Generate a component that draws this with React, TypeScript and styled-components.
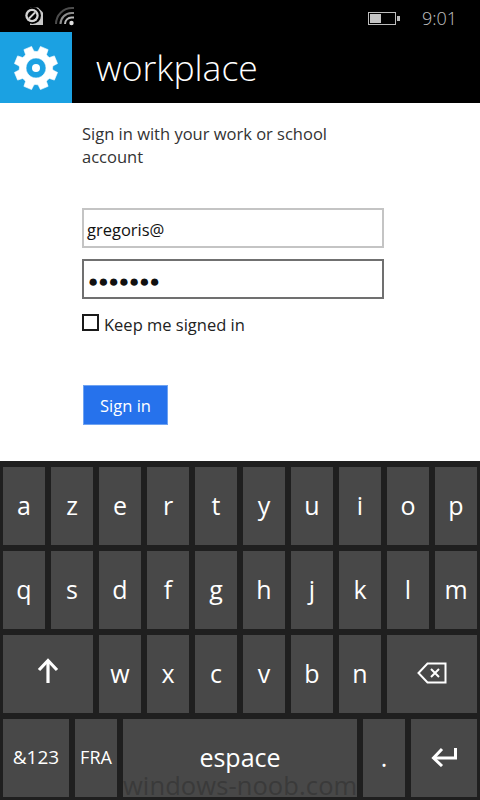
import { FC } from 'react';
import styled, { createGlobalStyle } from 'styled-components';

const UI_FONT = '"Open Sans", "Noto Sans", "Liberation Sans", sans-serif';

const GlobalStyle = createGlobalStyle`
  html, body {
    margin: 0;
    padding: 0;
    background: #000;
  }
  * {
    box-sizing: border-box;
  }
`;

type KeyDef = {
  label: string;
  span?: number;
  kind?: 'shift' | 'back' | 'enter';
  fontSize?: number;
};

const rows: KeyDef[] = [
  ...'azertyuiop'.split('').map((label) => ({ label })),
  ...'qsdfghjklm'.split('').map((label) => ({ label })),
  { label: 'shift', span: 4, kind: 'shift' },
  ...'wxcvbn'.split('').map((label) => ({ label })),
  { label: 'back', span: 4, kind: 'back' },
  { label: '&123', span: 3, fontSize: 19 },
  { label: 'FRA', span: 2, fontSize: 18 },
  { label: 'espace', span: 10 },
  { label: '.', span: 2 },
  { label: 'enter', span: 3, kind: 'enter' },
];

const GearIcon: FC = () => {
  const teeth = 8;
  const cx = 36;
  const cy = 36;
  let d = '';
  for (let i = 0; i < teeth; i++) {
    const a = (i / teeth) * Math.PI * 2 + Math.PI / 8;
    const w = 0.24;
    const pts = [
      [16.5, a - 0.37],
      [17, a - w - 0.03],
      [22, a - w + 0.05],
      [22, a + w - 0.05],
      [17, a + w + 0.03],
    ];
    pts.forEach(([r, t], j) => {
      const x = (cx + r * Math.cos(t)).toFixed(2);
      const y = (cy + r * Math.sin(t)).toFixed(2);
      d += `${i === 0 && j === 0 ? 'M' : 'L'}${x} ${y} `;
    });
  }
  d += 'Z M36 26 a10 10 0 1 0 0.01 0 Z';
  return (
    <svg width="72" height="72" viewBox="0 0 72 72">
      <path d={d} fill="#fff" fillRule="evenodd" stroke="#fff" strokeWidth="0.6" strokeLinejoin="round" />
      <circle cx="36" cy="36" r="4" fill="#fff" />
    </svg>
  );
};

const ShiftIcon: FC = () => (
  <svg width="22" height="26" viewBox="0 0 22 26" fill="none" stroke="#fff" strokeWidth="3.2">
    <path d="M11 25V3" />
    <path d="M2 12l9-9.5 9 9.5" />
  </svg>
);

const BackIcon: FC = () => (
  <svg width="30" height="22" viewBox="0 0 30 22" fill="none" stroke="#fff" strokeWidth="2">
    <path d="M28.5 1.5H10.5L1.5 11l9 9.5h18z" />
    <path d="M14 7l8 8M22 7l-8 8" />
  </svg>
);

const EnterIcon: FC = () => (
  <svg width="26" height="20" viewBox="0 0 26 20" fill="none" stroke="#fff" strokeWidth="3">
    <path d="M24.5 1v10H3" />
    <path d="M11 2l-8.5 9 8.5 8" />
  </svg>
);

const App: FC = () => (
  <Screen>
    <GlobalStyle />
    <StatusBar>
      <StatusLeft>
        <svg width="20" height="20" viewBox="0 0 20 20">
          <path d="M6 1.5h8l5 5v12.5H6z" fill="#c8c8c8" />
          <circle cx="8.5" cy="9.5" r="8.5" fill="#000" />
          <circle cx="8" cy="9.5" r="6.7" fill="#d4d4d4" />
          <circle cx="8" cy="9.5" r="4.4" fill="#000" />
          <path d="M5 12.5l6-6" stroke="#d4d4d4" strokeWidth="1.8" />
        </svg>
        <svg width="19" height="20" viewBox="0 0 19 20" fill="none">
          <path d="M1 18a16 16 0 0 1 16-16h2" strokeWidth="2" stroke="#4c4c4c" />
          <path d="M5.5 18a11 11 0 0 1 11-11h2.5" strokeWidth="2" stroke="#8c8c8c" />
          <path d="M10 18a6.5 6.5 0 0 1 6.5-6.5h2.5" strokeWidth="2" stroke="#bcbcbc" />
          <circle cx="16.5" cy="17" r="2.2" fill="#e0e0e0" />
        </svg>
      </StatusLeft>
      <StatusRight>
        <Battery>
          <BatteryLevel />
        </Battery>
        <BatteryCap />
        <Clock>9:01</Clock>
      </StatusRight>
    </StatusBar>
    <Header>
      <AppTile>
        <GearIcon />
      </AppTile>
      <Title>workplace</Title>
    </Header>
    <Form>
      <Intro>Sign in with your work or school account</Intro>
      <Field>gregoris@</Field>
      <PasswordField>●●●●●●●</PasswordField>
      <KeepRow>
        <CheckBox />
        <KeepLabel>Keep me signed in</KeepLabel>
      </KeepRow>
      <SignIn>Sign in</SignIn>
    </Form>
    <Keyboard>
      {rows.map((key, i) => (
        <Key key={i} $span={key.span ?? 2} $fontSize={key.fontSize ?? 25} $lift={key.kind === 'shift' ? 7 : 3}>
          {key.kind === 'shift' && <ShiftIcon />}
          {key.kind === 'back' && <BackIcon />}
          {key.kind === 'enter' && <EnterIcon />}
          {!key.kind && key.label}
        </Key>
      ))}
      <Watermark>windows-noob.com</Watermark>
    </Keyboard>
  </Screen>
);

export default App;

const Screen = styled.div`
  width: 480px;
  height: 800px;
  overflow: hidden;
  display: flex;
  flex-direction: column;
  background: #fff;
  font-family: ${UI_FONT};
`;

const StatusBar = styled.div`
  height: 32px;
  background: #000;
  display: flex;
  align-items: flex-start;
  justify-content: space-between;
  padding: 6px 24px 0;
`;

const StatusLeft = styled.div`
  display: flex;
  gap: 11px;
`;

const StatusRight = styled.div`
  display: flex;
  align-items: center;
  height: 24px;
`;

const Battery = styled.div`
  width: 28px;
  height: 13px;
  border: 1px solid #bdbdbd;
  padding: 1px;
`;

const BatteryLevel = styled.div`
  width: 11px;
  height: 100%;
  background: #c4c4c4;
`;

const BatteryCap = styled.div`
  width: 3px;
  height: 5px;
  margin-left: 1px;
  background: #bdbdbd;
`;

const Clock = styled.div`
  margin-left: 22px;
  margin-right: -1px;
  color: #c0c0c0;
  font-size: 18px;
  font-weight: 300;
  line-height: 24px;
`;

const Header = styled.div`
  height: 71px;
  background: #000;
  display: flex;
  align-items: flex-start;
`;

const AppTile = styled.div`
  width: 72px;
  height: 72px;
  background: #1ba1e2;
`;

const Title = styled.div`
  margin-left: 24px;
  color: #fff;
  font-size: 35.5px;
  font-weight: 300;
  line-height: 70px;
`;

const Form = styled.div`
  height: 358px;
  padding: 19px 96px 0 82px;
  background: #fff;
  display: flex;
  flex-direction: column;
  align-items: flex-start;
`;

const Intro = styled.div`
  width: 270px;
  height: 75px;
  color: #333;
  font-size: 16.5px;
  line-height: 23px;
`;

const Field = styled.div`
  width: 302px;
  height: 40px;
  margin-top: 11px;
  padding-left: 3px;
  border: 2px solid #c4c4c4;
  color: #111;
  font-size: 16.5px;
  line-height: 39px;
  white-space: nowrap;
`;

const PasswordField = styled(Field)`
  padding-left: 4px;
  border-color: #707070;
  font-size: 17px;
  line-height: 40px;
`;

const KeepRow = styled.div`
  display: flex;
  align-items: flex-start;
  margin-top: 15px;
  height: 18px;
`;

const CheckBox = styled.div`
  width: 17px;
  height: 17px;
  border: 2px solid #1a1a1a;
`;

const KeepLabel = styled.div`
  margin-left: 5px;
  color: #222;
  font-size: 16.5px;
  line-height: 22px;
`;

const SignIn = styled.div`
  width: 85px;
  height: 40px;
  margin: 53px 0 0 1px;
  border: 1px solid #6fa3f1;
  background: #2672ec;
  color: #fff;
  font-size: 16.5px;
  line-height: 40px;
  text-align: center;
`;

const Keyboard = styled.div`
  position: relative;
  flex: 1;
  background: #1f1f1f;
  padding: 6px 3px 3px;
  display: grid;
  grid-template-columns: repeat(20, 18px);
  grid-auto-rows: 78px;
  gap: 6px;
`;

const Key = styled.div<{ $span: number; $fontSize: number; $lift: number }>`
  grid-column: span ${(props) => props.$span};
  display: flex;
  align-items: center;
  justify-content: center;
  padding-bottom: ${(props) => props.$lift}px;
  background: #484848;
  color: #fff;
  font-size: ${(props) => props.$fontSize}px;
  font-weight: 500;
`;

const Watermark = styled.div`
  position: absolute;
  left: 123px;
  bottom: 0;
  color: #3a3a3a;
  font-size: 25.5px;
  letter-spacing: 0.1px;
  line-height: 29px;
  white-space: nowrap;
`;
